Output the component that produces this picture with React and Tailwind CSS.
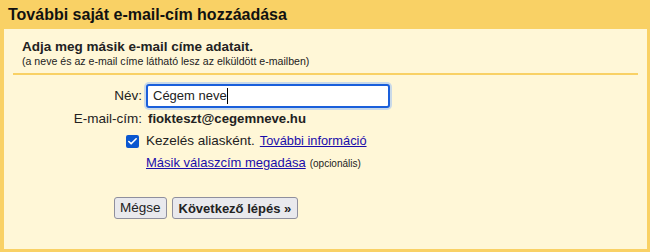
import { Check } from 'lucide-react';

export default function App() {
  return (
    <div className="w-[650px] h-[252px] bg-[#f9d165] flex flex-col font-['Liberation_Sans',Arial,sans-serif] text-[#222]">
      {/* Header */}
      <div className="h-[29px] px-[8px] flex items-center shrink-0">
        <h1 className="text-[16px] font-bold leading-none text-[#111]">További saját e-mail-cím hozzáadása</h1>
      </div>

      {/* Body */}
      <div className="flex-1 ml-[4px] mr-[3px] mb-[3px] bg-[#fff7d7] flex flex-col">
        <div className="pl-[18px] pt-[9px]">
          <p className="text-[13.5px] font-bold leading-[17px]">Adja meg másik e-mail címe adatait.</p>
          <p className="text-[10.6px] leading-[12px]">(a neve és az e-mail címe látható lesz az elküldött e-mailben)</p>
        </div>
        <div className="mx-[9px] mt-[6px] h-[2px] bg-[#f9d165]" />

        <div className="grid grid-cols-[138px_1fr] gap-x-[4px] mt-[9px] text-[13px] items-center">
          <span className="text-right text-[13.5px] leading-[24px] self-start">Név:</span>
          <div className="w-[244px] h-[24px] rounded-[3px] border-2 border-[#1a5fdb] ring-2 ring-[#c9d9e8] bg-white flex items-center pl-[5px] text-[13px]">
            <span>Cégem neve</span>
            <span className="w-px h-[16px] bg-black" />
          </div>

          <span className="text-right text-[13.5px] leading-[22px]">E-mail-cím:</span>
          <span className="font-bold leading-[22px] pl-[2px] text-[13.2px]">fiokteszt@cegemneve.hu</span>

          <div className="flex justify-end items-center h-[22px]">
            <span className="w-[13px] h-[13px] rounded-[2px] bg-[#0b57d0] flex items-center justify-center mr-[3px]">
              <Check className="w-[11px] h-[11px] text-white" strokeWidth={3.5} />
            </span>
          </div>
          <div className="flex items-center h-[22px] gap-[5px] text-[13.5px]">
            <span>Kezelés aliasként.</span>
            <a className="text-[#1a0dab] underline text-[12.8px]">További információ</a>
          </div>

          <span />
          <div className="flex items-center h-[22px] gap-[4px]">
            <a className="text-[#1a0dab] underline text-[13px]">Másik válaszcím megadása</a>
            <span className="text-[10px]">(opcionális)</span>
          </div>
        </div>

        <div className="flex gap-[5px] pl-[110px] mt-[23px]">
          <button className="h-[22px] px-[5px] rounded-[3px] border border-[#8f8f9d] bg-[#e9e9ed] text-[13.5px] text-[#222] leading-none">Mégse</button>
          <button className="h-[22px] px-[6px] rounded-[3px] border border-[#8f8f9d] bg-[#e9e9ed] text-[13px] font-bold text-[#222] leading-none">Következő lépés »</button>
        </div>
      </div>
    </div>
  );
}
